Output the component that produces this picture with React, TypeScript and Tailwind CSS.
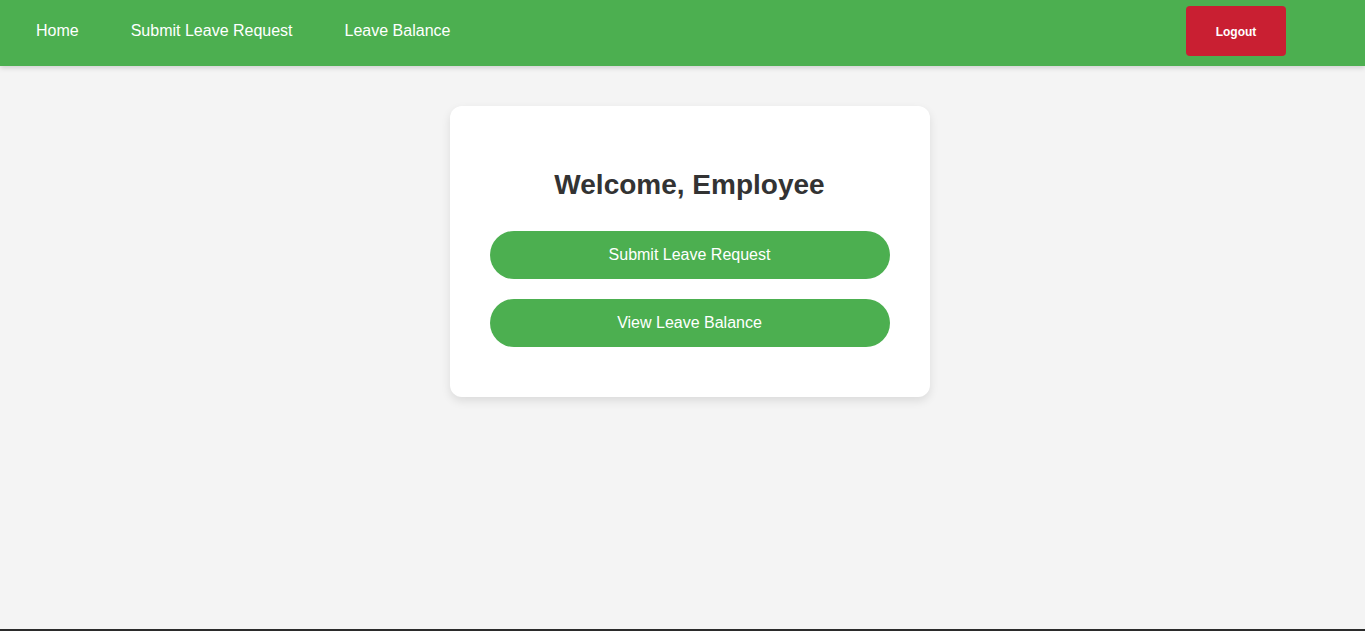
import React from 'react';

const navLinks = ['Home', 'Submit Leave Request', 'Leave Balance'];

const NavBar: React.FC = () => (
    <nav className="h-[66px] bg-[#4caf50] flex items-start justify-between shadow-[0_2px_5px_rgba(0,0,0,0.15)] relative z-10">
        <div className="flex items-center h-[62px] pl-[36px] gap-[52px]">
            {navLinks.map(link => (
                <a key={link} href="#" className="text-white text-[16px] leading-[18px]">{link}</a>
            ))}
        </div>
        <button className="mt-[6px] mr-[79px] w-[100px] h-[50px] pt-[2px] rounded-[4px] bg-[#c91f32] text-white text-[12px] font-bold">Logout</button>
    </nav>
);

const App: React.FC = () => {
    return (
        <div className="h-[631px] bg-[#f4f4f4] border-b-2 border-[#2b2b2b] font-['Liberation_Sans',Arial,sans-serif] overflow-hidden">
            <NavBar />
            <main className="flex justify-center pt-[40px] pl-[14px]">
                <div className="w-[480px] bg-white rounded-[12px] shadow-[0_4px_10px_rgba(0,0,0,0.1)] px-[40px] pt-[63px] pb-[50px] flex flex-col">
                    <h2 className="text-[28px] leading-[32px] font-bold text-[#333333] text-center">Welcome, Employee</h2>
                    <div className="flex flex-col gap-[20px] mt-[30px]">
                        <button className="h-[48px] rounded-full bg-[#4caf50] text-white text-[16px]">Submit Leave Request</button>
                        <button className="h-[48px] rounded-full bg-[#4caf50] text-white text-[16px]">View Leave Balance</button>
                    </div>
                </div>
            </main>
        </div>
    );
};

export default App;
